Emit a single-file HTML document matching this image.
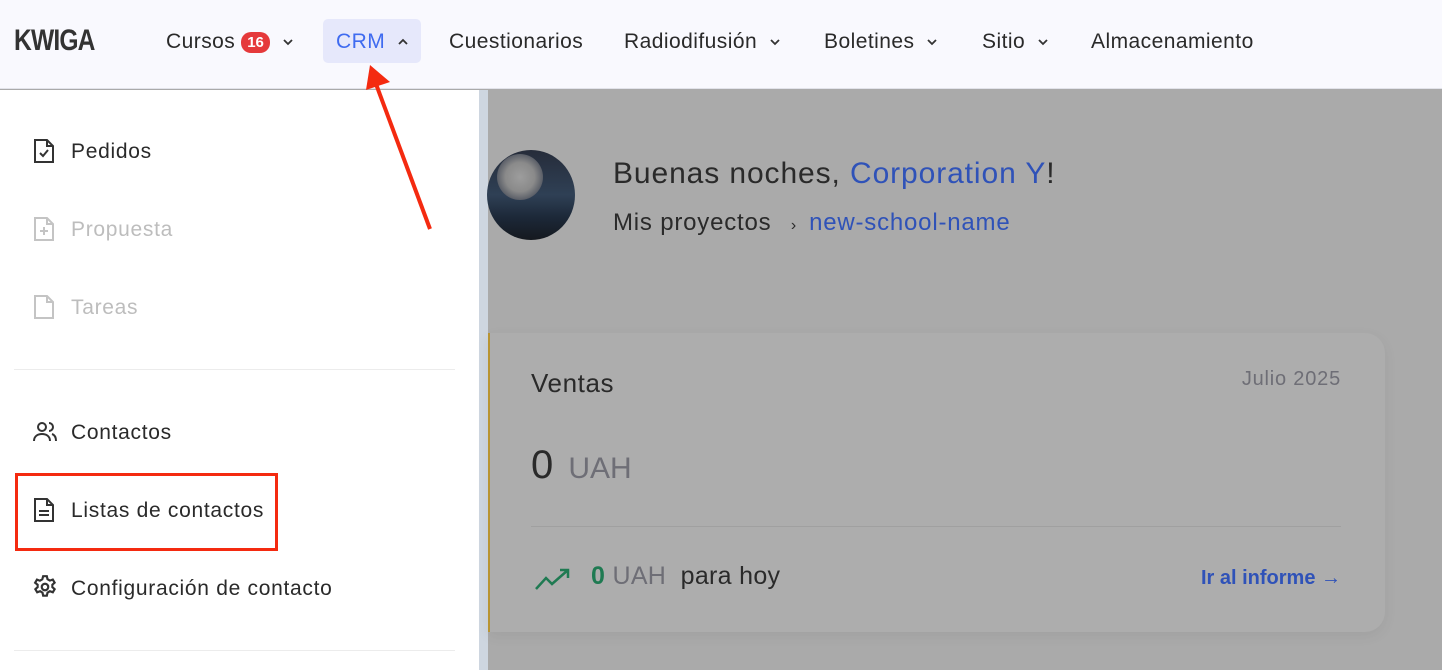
<!DOCTYPE html>
<html><head><meta charset="utf-8"><style>
*{margin:0;padding:0;box-sizing:border-box}
body{width:1442px;height:670px;overflow:hidden;font-family:"Liberation Sans",sans-serif;background:#aaaaaa;position:relative;color:#2b2b2b}
.nav{position:absolute;left:0;top:0;width:1442px;height:89px;background:#f9f9fe;border-bottom:1px solid #e2e3ea}
.ni{position:absolute;top:29px;height:26px;line-height:26px;font-size:21px;letter-spacing:.45px;color:#2a2a2a;white-space:nowrap;display:flex;align-items:center}
.logo{position:absolute;left:14px;top:24px;font-size:30px;font-weight:bold;letter-spacing:-1px;color:#333;transform:scaleX(.82);transform-origin:left}
.badge{display:inline-block;background:#e5393b;color:#fff;font-size:15px;font-weight:bold;border-radius:10px;height:21px;line-height:21px;padding:0 6px;margin-left:6px;letter-spacing:0}
.cv{margin-left:12px}
.crm{position:absolute;left:323px;top:19px;width:98px;height:44px;background:#e6e8fb;border-radius:5px}
.side{position:absolute;left:0;top:90px;width:479px;height:580px;background:#fff}
.strip{position:absolute;left:479px;top:90px;width:9px;height:580px;background:#ced6e0}
.item{position:absolute;left:71px;font-size:21px;letter-spacing:.7px;color:#2a2a2a}
.ic{position:absolute;left:32px}
.hr{position:absolute;left:14px;width:441px;height:1px;background:#ececec}
.card{position:absolute;left:488px;top:333px;width:897px;height:299px;background:#adadad;border-radius:0 20px 20px 0;box-shadow:0 4px 14px rgba(0,0,0,.06);border-left:2px solid #b89433}
</style></head><body>
<div class="nav">
<div class="logo">KWIGA</div>
<div class="ni" style="left:166px">Cursos<span class="badge">16</span><svg class="cv" width="12" height="8" viewBox="0 0 12 8" fill="none" stroke="#333" stroke-width="1.8"><path d="M2 2l4 4 4-4"/></svg></div>
<div class="crm"></div>
<div class="ni" style="left:336px;color:#3f6bf0">CRM<svg class="cv" width="12" height="8" viewBox="0 0 12 8" fill="none" stroke="#333" stroke-width="1.8"><path d="M2 6l4-4 4 4"/></svg></div>
<div class="ni" style="left:449px">Cuestionarios</div>
<div class="ni" style="left:624px">Radiodifusión<svg class="cv" width="12" height="8" viewBox="0 0 12 8" fill="none" stroke="#333" stroke-width="1.8"><path d="M2 2l4 4 4-4"/></svg></div>
<div class="ni" style="left:824px">Boletines<svg class="cv" width="12" height="8" viewBox="0 0 12 8" fill="none" stroke="#333" stroke-width="1.8"><path d="M2 2l4 4 4-4"/></svg></div>
<div class="ni" style="left:982px">Sitio<svg class="cv" width="12" height="8" viewBox="0 0 12 8" fill="none" stroke="#333" stroke-width="1.8"><path d="M2 2l4 4 4-4"/></svg></div>
<div class="ni" style="left:1091px">Almacenamiento</div>
</div>
<div class="side">
<svg class="ic" style="top:47px" width="24" height="28" viewBox="0 0 24 26" fill="none" stroke="#333" stroke-width="2"><path d="M3 2h12l6 6v16H3z M15 2v6h6 M8 15l3 3 5-6"/></svg>
<div class="item" style="top:50px">Pedidos</div>
<svg class="ic" style="top:125px" width="24" height="28" viewBox="0 0 24 26" fill="none" stroke="#c4c4c4" stroke-width="2"><path d="M3 2h12l6 6v16H3z M15 2v6h6 M12 11v8 M8 15h8"/></svg>
<div class="item" style="top:128px;color:#bdbdbd">Propuesta</div>
<svg class="ic" style="top:203px" width="24" height="28" viewBox="0 0 24 26" fill="none" stroke="#c4c4c4" stroke-width="2"><path d="M3 2h12l6 6v16H3z M15 2v6h6"/></svg>
<div class="item" style="top:206px;color:#bdbdbd">Tareas</div>
<div class="hr" style="top:279px"></div>
<svg class="ic" style="top:330px" width="26" height="24" viewBox="0 0 26 24" fill="none" stroke="#333" stroke-width="2"><circle cx="10" cy="7" r="4"/><path d="M2 21c0-5 4-7 8-7s8 2 8 7 M17 3a4 4 0 0 1 0 8 M20 14c3 1 4 4 4 7"/></svg>
<div class="item" style="top:331px">Contactos</div>
<div style="position:absolute;left:15px;top:383px;width:263px;height:78px;border:3px solid #f42a10"></div>
<svg class="ic" style="top:406px" width="24" height="28" viewBox="0 0 24 26" fill="none" stroke="#333" stroke-width="2"><path d="M3 2h12l6 6v16H3z M15 2v6h6 M7 14h10 M7 18h10"/></svg>
<div class="item" style="top:409px">Listas de contactos</div>
<svg class="ic" style="top:484px" width="26" height="26" viewBox="0 0 24 24" fill="none" stroke="#333" stroke-width="2"><circle cx="12" cy="12" r="3"/><path d="M10.3 2h3.4l.6 2.8 2.2 1.3 2.7-1 1.7 2.9-2.1 1.9v2.2l2.1 1.9-1.7 2.9-2.7-1-2.2 1.3-.6 2.8h-3.4l-.6-2.8-2.2-1.3-2.7 1-1.7-2.9 2.1-1.9v-2.2L2.9 8.1l1.7-2.9 2.7 1 2.2-1.3z"/></svg>
<div class="item" style="top:487px">Configuración de contacto</div>
<div class="hr" style="top:560px"></div>
</div>
<div class="strip"></div>
<div style="position:absolute;left:487px;top:150px;width:88px;height:90px;border-radius:50%;overflow:hidden;background:linear-gradient(#262c3a 0,#2f4055 50%,#1c2838 75%,#15191f 100%)">
<div style="position:absolute;left:10px;top:4px;width:46px;height:46px;border-radius:50%;background:radial-gradient(circle,#9d9d9d 0,#8a8a8a 45%,#5b5f68 70%,transparent 100%)"></div>
</div>
<div style="position:absolute;left:613px;top:157px;font-size:30px;letter-spacing:.9px;color:#2a2a2a">Buenas noches, <span style="color:#2f52b8">Corporation Y</span>!</div>
<div style="position:absolute;left:613px;top:209px;font-size:24px;letter-spacing:.8px;color:#2a2a2a">Mis proyectos <span style="font-size:16px;margin:0 12px">&#8250;</span><span style="color:#2f52b8">new-school-name</span></div>
<div class="card">
<div style="position:absolute;left:41px;top:35px;font-size:26px;letter-spacing:.6px;color:#2a2a2a">Ventas</div>
<div style="position:absolute;right:44px;top:35px;font-size:20px;letter-spacing:.8px;color:#6e6e76">Julio 2025</div>
<div style="position:absolute;left:41px;top:110px;font-size:40px;color:#2a2a2a">0 <span style="font-size:30px;color:#6e6e76;margin-left:4px">UAH</span></div>
<div style="position:absolute;left:41px;top:193px;width:810px;height:1px;background:#a0a0a0"></div>
<svg style="position:absolute;left:44px;top:234px" width="38" height="24" viewBox="0 0 38 24" fill="none" stroke="#1f7a52" stroke-width="2.5"><path d="M2 22l10-11 6 6L34 3 M26 3h8v8"/></svg>
<div style="position:absolute;left:101px;top:229px;font-size:25px;color:#2a2a2a;letter-spacing:.3px"><b style="color:#1f7a52">0</b> <span style="color:#6e6e76">UAH</span>&nbsp; para hoy</div>
<div style="position:absolute;right:44px;top:234px;font-size:20px;font-weight:bold;color:#2f52b8">Ir al informe &#8594;</div>
</div>
<svg style="position:absolute;left:0;top:0" width="1442" height="670"><line x1="430" y1="229" x2="376" y2="84" stroke="#f42a10" stroke-width="4"/><polygon points="370,65 390,82 366,90" fill="#f42a10"/></svg>
</body></html>
